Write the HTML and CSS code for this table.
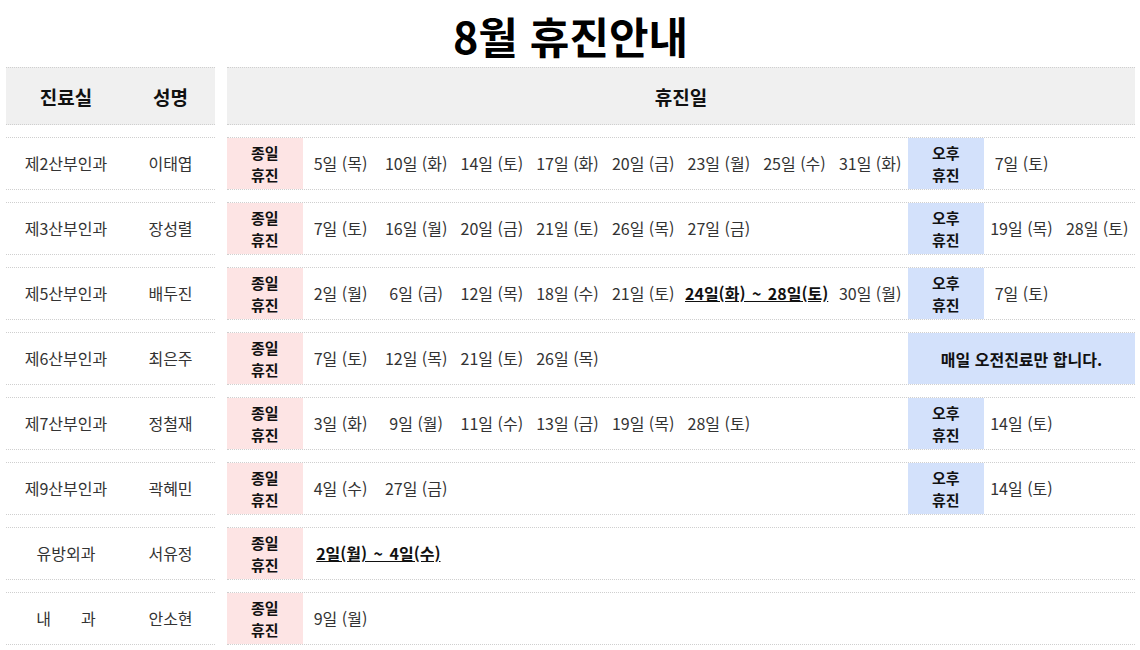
FILE: index.html
```html
<!DOCTYPE html>
<html lang="ko">
<head>
<meta charset="utf-8">
<title>8월 휴진안내</title>
<link rel="stylesheet" href="styles.css">
</head>
<body>
<div class="page">
  <h1 class="title">8월 휴진안내</h1>
  <div class="table">
    <div class="row head">
      <div class="left">
        <div class="cell">진료실</div>
        <div class="cell">성명</div>
      </div>
      <div class="right">
        <div class="cell all">휴진일</div>
      </div>
    </div>

    <div class="row">
      <div class="left"><div class="cell">제2산부인과</div><div class="cell">이태엽</div></div>
      <div class="right">
        <div class="cell lab day">종일<br>휴진</div>
        <div class="cell">5일 (목)</div><div class="cell">10일 (화)</div><div class="cell">14일 (토)</div><div class="cell">17일 (화)</div>
        <div class="cell">20일 (금)</div><div class="cell">23일 (월)</div><div class="cell">25일 (수)</div><div class="cell">31일 (화)</div>
        <div class="cell lab pm">오후<br>휴진</div>
        <div class="cell">7일 (토)</div>
      </div>
    </div>

    <div class="row">
      <div class="left"><div class="cell">제3산부인과</div><div class="cell">장성렬</div></div>
      <div class="right">
        <div class="cell lab day">종일<br>휴진</div>
        <div class="cell">7일 (토)</div><div class="cell">16일 (월)</div><div class="cell">20일 (금)</div><div class="cell">21일 (토)</div>
        <div class="cell">26일 (목)</div><div class="cell">27일 (금)</div>
        <div class="cell lab pm">오후<br>휴진</div>
        <div class="cell">19일 (목)</div><div class="cell">28일 (토)</div>
      </div>
    </div>

    <div class="row">
      <div class="left"><div class="cell">제5산부인과</div><div class="cell">배두진</div></div>
      <div class="right">
        <div class="cell lab day">종일<br>휴진</div>
        <div class="cell">2일 (월)</div><div class="cell">6일 (금)</div><div class="cell">12일 (목)</div><div class="cell">18일 (수)</div>
        <div class="cell">21일 (토)</div><div class="cell range">24일(화) ~ 28일(토)</div><div class="cell">30일 (월)</div>
        <div class="cell lab pm">오후<br>휴진</div>
        <div class="cell">7일 (토)</div>
      </div>
    </div>

    <div class="row">
      <div class="left"><div class="cell">제6산부인과</div><div class="cell">최은주</div></div>
      <div class="right">
        <div class="cell lab day">종일<br>휴진</div>
        <div class="cell">7일 (토)</div><div class="cell">12일 (목)</div><div class="cell">21일 (토)</div><div class="cell">26일 (목)</div>
        <div class="cell lab pm note">매일 오전진료만 합니다.</div>
      </div>
    </div>

    <div class="row">
      <div class="left"><div class="cell">제7산부인과</div><div class="cell">정철재</div></div>
      <div class="right">
        <div class="cell lab day">종일<br>휴진</div>
        <div class="cell">3일 (화)</div><div class="cell">9일 (월)</div><div class="cell">11일 (수)</div><div class="cell">13일 (금)</div>
        <div class="cell">19일 (목)</div><div class="cell">28일 (토)</div>
        <div class="cell lab pm">오후<br>휴진</div>
        <div class="cell">14일 (토)</div>
      </div>
    </div>

    <div class="row">
      <div class="left"><div class="cell">제9산부인과</div><div class="cell">곽혜민</div></div>
      <div class="right">
        <div class="cell lab day">종일<br>휴진</div>
        <div class="cell">4일 (수)</div><div class="cell">27일 (금)</div>
        <div class="cell lab pm">오후<br>휴진</div>
        <div class="cell">14일 (토)</div>
      </div>
    </div>

    <div class="row">
      <div class="left"><div class="cell">유방외과</div><div class="cell">서유정</div></div>
      <div class="right">
        <div class="cell lab day">종일<br>휴진</div>
        <div class="cell range">2일(월) ~ 4일(수)</div>
      </div>
    </div>

    <div class="row">
      <div class="left"><div class="cell"><span class="spread"><span>내</span><span>과</span></span></div><div class="cell">안소현</div></div>
      <div class="right">
        <div class="cell lab day">종일<br>휴진</div>
        <div class="cell">9일 (월)</div>
      </div>
    </div>
  </div>
</div>
</body>
</html>
```

FILE: styles.css
```css
html, body {
  margin: 0;
  padding: 0;
  background: #fff;
}

body {
  font-family: "Noto Sans CJK KR", "Noto Sans", sans-serif;
  color: #333;
}

.page {
  width: 1129px;
  margin-left: 6px;
}

.title {
  margin: 0;
  height: 67px;
  line-height: 70px;
  font-size: 43px;
  font-weight: 700;
  color: #000;
  text-align: center;
}

.table {
  display: flex;
  flex-direction: column;
  gap: 12px;
}

.row {
  display: flex;
  gap: 12px;
}

.left {
  width: 209px;
  display: grid;
  grid-template-columns: 120px 89px;
  border-top: 1px dotted #cfcfcf;
  border-bottom: 1px dotted #cfcfcf;
}

.right {
  flex: 1;
  display: grid;
  grid-template-columns: repeat(12, 1fr);
  grid-template-rows: 51px;
  border-top: 1px dotted #cfcfcf;
  border-bottom: 1px dotted #cfcfcf;
}

.cell {
  height: 51px;
  display: flex;
  align-items: center;
  justify-content: center;
  text-align: center;
  font-size: 16px;
  line-height: 21px;
  white-space: nowrap;
}

.head .left,
.head .right {
  background: #f0f0f0;
  grid-template-rows: 56px;
}

.head .cell {
  height: 56px;
  font-size: 19px;
  font-weight: 700;
  color: #111;
}

.head .all {
  grid-column: 1 / -1;
}

.lab {
  font-size: 15px;
  line-height: 22px;
  font-weight: 700;
  color: #111;
}

.day {
  background: #fde4e4;
}

.pm {
  grid-column: 10;
  background: #d3e1fb;
}

.note {
  grid-column: 10 / span 3;
  font-size: 16px;
}

.range {
  grid-column: span 2;
  font-weight: 700;
  color: #111;
  text-decoration: underline;
  word-spacing: 2px;
}

.spread {
  display: inline-flex;
  gap: 30px;
}
```
